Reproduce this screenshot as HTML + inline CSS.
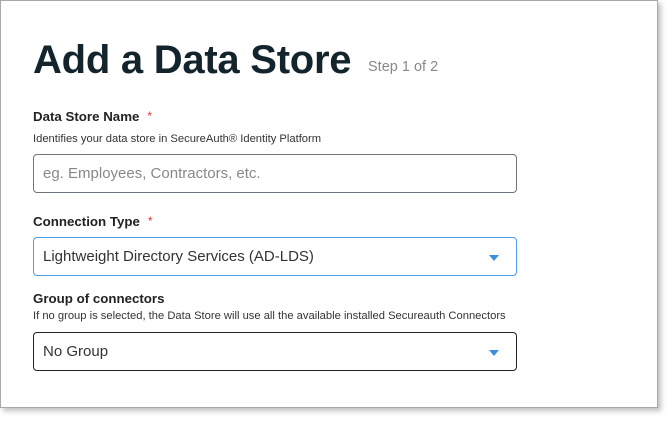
<!DOCTYPE html>
<html><head><style>
body{margin:0;width:672px;height:423px;background:#fff;font-family:"Liberation Sans",sans-serif;position:relative;overflow:hidden}
.panel{position:absolute;left:0;top:0;width:656px;height:406px;border:1px solid #a8a8a8;box-shadow:3px 3px 5px rgba(0,0,0,.25);background:#fff}
.a{position:absolute;white-space:nowrap}
h1{position:absolute;left:33px;top:38px;margin:0;font-size:40px;font-weight:bold;color:#13242c;letter-spacing:-0.25px}
.lbl{font-size:13.3px;font-weight:bold;color:#222}
.star{color:#e33;font-size:12px;margin-left:8px;vertical-align:top;font-weight:normal}
.help{font-size:11.2px;color:#333}
.box{position:absolute;left:33px;width:482px;height:37px;border:1px solid #6c757d;border-radius:4px;font-size:15px;color:#333;line-height:37px;padding-left:9px;box-sizing:content-box}
.arr{position:absolute;right:17px;top:17px;width:0;height:0;border-left:5px solid transparent;border-right:5px solid transparent;border-top:6px solid #3d8ee0}
</style></head><body>
<div class="panel"></div>
<h1>Add a Data Store</h1>
<div class="a" style="left:368px;top:59px;font-size:14.5px;color:#888">Step 1 of 2</div>
<div class="a lbl" style="left:33px;top:109px">Data Store Name<span class="star">*</span></div>
<div class="a help" style="left:33px;top:133px">Identifies your data store in SecureAuth® Identity Platform</div>
<div class="box" style="top:154px;width:473px;color:#888">eg. Employees, Contractors, etc.</div>
<div class="a lbl" style="left:33px;top:214px">Connection Type<span class="star">*</span></div>
<div class="box" style="top:237px;width:473px;border-color:#4a9fe8">Lightweight Directory Services (AD-LDS)<div class="arr"></div></div>
<div class="a lbl" style="left:33px;top:291px">Group of connectors</div>
<div class="a help" style="left:33px;top:310px">If no group is selected, the Data Store will use all the available installed Secureauth Connectors</div>
<div class="box" style="top:332px;width:473px;border-color:#222">No Group<div class="arr"></div></div>
</body></html>
